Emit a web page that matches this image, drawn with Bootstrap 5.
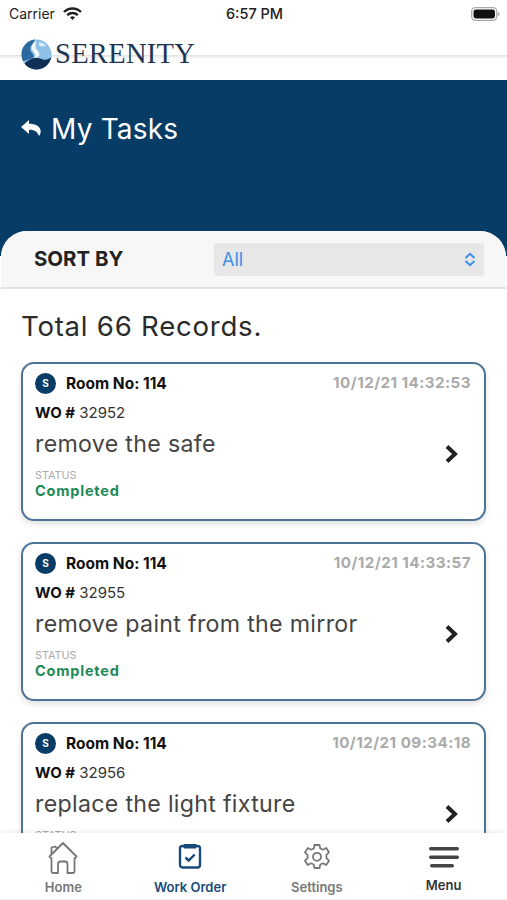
<!DOCTYPE html>
<html lang="en">
<head>
    <meta charset="UTF-8">
    <meta name="viewport" content="width=device-width, initial-scale=1.0">
    <title>My Tasks</title>
    <link href="https://cdn.jsdelivr.net/npm/bootstrap@5.3.0/dist/css/bootstrap.min.css" rel="stylesheet">
    <style>
        html, body { height: 900px; overflow: hidden; }
        body { font-family: Inter, "Open Sans", sans-serif; background: #fff; color: #222; }
        .phone { height: 900px; overflow: hidden; position: relative; }

        .status-bar { height: 27px; padding: 0 7px 0 9px; font-size: 14px; color: #222; }
        .status-left { width: 170px; }
        .status-time { font-weight: 500; font-size: 14.5px; }
        .status-right { width: 170px; }

        .logo-bar { height: 53px; position: relative; }
        .logo-line { position: absolute; left: 0; right: 0; top: 28px; height: 3px; background: linear-gradient(#e2e2e2, #f6f6f6); }
        .logo-wrap { position: relative; padding: 11px 0 0 21px; }
        .logo-text { font-family: "Liberation Serif", serif; font-size: 28.5px; line-height: 32px; color: #1d3553; margin-left: 3px; letter-spacing: .3px; }

        .hero { height: 176px; background: #073c67; color: #fff; padding: 31px 20px 0; }
        .hero-title { font-size: 28px; line-height: 36px; font-weight: 400; margin: 0 0 0 9px; letter-spacing: .2px; }

        .panel { margin: -25px 1px 0; background: #fff; border-radius: 26px 26px 0 0; overflow: hidden; }
        .sort-row { height: 58px; background: #f7f7f7; border-bottom: 2px solid #e2e2e2; padding: 12px 22px 0 33px; }
        .sort-label { font-size: 20.4px; font-weight: 700; width: 180px; color: #222; line-height: 32px; }
        .sort-box { height: 33px; background: #e7e7e7; border-radius: 3px; padding: 0 8px; color: #3d8fe8; font-size: 18px; }
        .total { font-size: 27.6px; line-height: 34px; margin: 20px 0 19px 20px; color: #2b2b2b; letter-spacing: .75px; font-weight: 400; }

        .task-list { padding: 0 20px 0 20px; gap: 21px; }
        .task-card { height: 159px; border: 2px solid #4d7397; border-radius: 13px; background: #fff; box-shadow: 0 3px 6px rgba(0,0,0,.12); padding: 8px 13px 0 12px; }
        .room-badge { width: 21px; height: 21px; border-radius: 50%; background: #073c67; color: #fff; font-size: 10px; font-weight: 700; }
        .room { font-size: 15.5px; font-weight: 700; color: #111; margin-left: 10px; }
        .stamp { font-size: 15.2px; font-weight: 700; color: #aaa; letter-spacing: .45px; }
        .wo { font-size: 15px; line-height: 18px; margin-top: 9px; color: #333; }
        .wo b { color: #111; }
        .task-name { font-size: 23.2px; line-height: 28px; color: #444; margin-top: 8px; letter-spacing: .3px; }
        .status-cap { font-size: 10.8px; line-height: 13px; color: #aaa; margin-top: 11px; }
        .status-val { font-size: 14.5px; line-height: 16px; font-weight: 700; color: #1c8a57; letter-spacing: .8px; margin-top: 1px; }
        .chev { position: absolute; right: 25px; top: 80px; }

        .tabbar { position: absolute; left: 0; right: 0; bottom: 0; height: 67px; background: #fff; border-bottom: 1px solid #eee; box-shadow: 0 -2px 4px rgba(0,0,0,.06); }
        .tab { width: 127px; height: 100%; font-size: 13px; font-weight: 600; color: #777; padding-top: 8px; }
        .tab svg { display: block; height: 34px; margin-bottom: 3px; }
        .tab-on { color: #174a78; }
        .tab-menu { color: #333; }
        .tab-menu svg { margin-bottom: 1px; }
    </style>
</head>
<body>
<div class="phone">
    <div class="status-bar d-flex align-items-center justify-content-between">
        <div class="status-left d-flex align-items-center gap-2">
            <span>Carrier</span>
            <svg width="19" height="14" viewBox="0 0 19 14" fill="none" stroke="#222" stroke-width="2.4">
                <path d="M1 5a12 12 0 0 1 17 0"/>
                <path d="M4.2 8.2a7.6 7.6 0 0 1 10.6 0"/>
                <path d="M9.5 13 7 10.6a3.5 3.5 0 0 1 5 0z" fill="#222" stroke="none"/>
            </svg>
        </div>
        <div class="status-time">6:57 PM</div>
        <div class="status-right d-flex justify-content-end">
            <svg width="29" height="14" viewBox="0 0 29 14">
                <rect x=".7" y=".7" width="25" height="12.6" rx="3.8" fill="none" stroke="#aaa" stroke-width="1.3"/>
                <rect x="2.5" y="2.5" width="21.5" height="9" rx="2.4" fill="#111"/>
                <path d="M27 5v4c1.200-.3 1.600-1.200 1.600-2s-.4-1.700-1.600-2z" fill="#aaa"/>
            </svg>
        </div>
    </div>

    <div class="logo-bar">
        <div class="logo-line"></div>
        <div class="logo-wrap d-flex align-items-center">
            <svg width="31" height="31" viewBox="0 0 31 31">
                <circle cx="15.500" cy="15.500" r="15" fill="#8fc0e6"/>
                <path d="M14 .6C6.500 1.200.5 7.500.5 15.500c0 2.500.6 4.800 1.700 6.800 2.800-1.300 6.800-1.600 9.300-3.300 1.700-1.300 1.400-3.300-.2-4.800C9 12 8.500 9 10.500 6.500 11.500 5 13 3 14 .6z" fill="#2b6a9f"/>
                <path d="M3.500 24.500C6 28 10.500 30.500 15.500 30.500c7.500 0 13.500-5.500 14.800-12.500-2.500 2.500-5.800 3.500-8.800 2.300-3-1-6-2.300-9-1.300-3.500 1-6.500 3-9 5.500z" fill="#0e3057"/>
                <path d="M15 1.500c-2.500 2.500-5 5-4.500 8 .4 2.500 3.500 4 3.800 6.800.2 1.500-.7 2.500-2 3 4-.3 6.500-2 6-4.800-.5-2.800-4-4.200-3.800-7 .1-2 .8-4 .5-6z" fill="#f4f8fb"/>
                <path d="M18 3.500c2.500-.5 5.500 1 6.500 3.500-2 .3-3.500.5-5 .3-1.500-.5-2-2.500-1.500-3.800z" fill="#dcebf7"/>
            </svg>
            <span class="logo-text">SERENITY</span>
        </div>
    </div>

    <div class="hero d-flex align-items-start">
        <svg width="22" height="19" viewBox="0 0 22 19" class="mt-2" fill="#fff">
            <path d="M9 1 1 8l8 7v-4.300c5 0 8 1.300 10 6.300 1.500-2 2-4 1.500-6-1-4.500-6-6.200-11.500-6.300z"/>
        </svg>
        <h1 class="hero-title">My Tasks</h1>
    </div>

    <div class="panel">
        <div class="sort-row d-flex">
            <div class="sort-label">SORT BY</div>
            <div class="sort-box flex-grow-1 d-flex align-items-center justify-content-between">
                <span>All</span>
                <svg width="12" height="15" viewBox="0 0 12 15" fill="none" stroke="#3d8fe8" stroke-width="2">
                    <path d="M1.500 6 6 1.800 10.500 6M1.500 9 6 13.200 10.500 9"/>
                </svg>
            </div>
        </div>
        <h2 class="total">Total 66 Records.</h2>
        <div class="task-list d-flex flex-column" id="tasks"></div>
    </div>

    <div class="tabbar d-flex">
        <div class="tab d-flex flex-column align-items-center">
            <svg width="30" height="34" viewBox="0 0 30 34" fill="none" stroke="#777" stroke-width="1.800" stroke-linejoin="round">
                <path d="M1.500 15.500 15 2l13.500 13.500-2 2v13a1.500 1.500 0 0 1-1.500 1.500h-5.500V23a2.500 2.500 0 0 0-2.500-2.500h-5A2.500 2.500 0 0 0 10 23v9H5a1.500 1.500 0 0 1-1.500-1.500v-13z"/>
                <path d="M3.500 13.500V6.500L7 5.500l2.500 2"/>
            </svg>
            <span>Home</span>
        </div>
        <div class="tab tab-on d-flex flex-column align-items-center">
            <svg width="24" height="34" viewBox="0 0 24 34" fill="none" stroke="#174a78" stroke-width="2.400">
                <rect x="2" y="5" width="20" height="21.500" rx="2.500"/>
                <path d="M6 3.500h12v3.500H6z" fill="#174a78" stroke-width="1"/>
                <path d="M7.500 16.500l3.200 3 6-6"/>
            </svg>
            <span>Work Order</span>
        </div>
        <div class="tab d-flex flex-column align-items-center">
            <svg width="28" height="34" viewBox="0 0 28 34" fill="none" stroke="#777" stroke-width="1.800" stroke-linejoin="round">
                <path d="M11.500 4h5l.8 3.500 2.700 1.200 3.200-1.700 2.800 4.300-2.600 2.500v3.400l2.600 2.500-2.800 4.300-3.200-1.700-2.700 1.200-.8 3.500h-5l-.8-3.500-2.700-1.200-3.200 1.700-2.800-4.300 2.600-2.500v-3.400l-2.600-2.500L5 7l3.200 1.700 2.700-1.200z"/>
                <circle cx="14" cy="15.800" r="4"/>
            </svg>
            <span>Settings</span>
        </div>
        <div class="tab tab-menu d-flex flex-column align-items-center">
            <svg width="30" height="34" viewBox="0 0 30 34" fill="#444">
                <rect y="6" width="30" height="3.500" rx="1.700"/>
                <rect y="14.500" width="30" height="3.500" rx="1.700"/>
                <rect x="1" y="23" width="24" height="3.500" rx="1.700"/>
            </svg>
            <span>Menu</span>
        </div>
    </div>
</div>

<script>
    const tasks = [
        { stamp: '10/12/21 14:32:53', wo: '32952', name: 'remove the safe' },
        { stamp: '10/12/21 14:33:57', wo: '32955', name: 'remove paint from the mirror' },
        { stamp: '10/12/21 09:34:18', wo: '32956', name: 'replace the light fixture' }
    ];

    document.getElementById('tasks').innerHTML = tasks.map(t => `
        <div class="task-card position-relative flex-shrink-0">
            <div class="d-flex align-items-center justify-content-between">
                <div class="d-flex align-items-center">
                    <span class="room-badge d-flex align-items-center justify-content-center">S</span>
                    <span class="room">Room No: 114</span>
                </div>
                <span class="stamp">${t.stamp}</span>
            </div>
            <div class="wo"><b>WO #</b> ${t.wo}</div>
            <div class="task-name">${t.name}</div>
            <div class="status-cap">STATUS</div>
            <div class="status-val">Completed</div>
            <svg class="chev" width="15" height="20" viewBox="0 0 15 20" fill="none" stroke="#222" stroke-width="4">
                <path d="M3 2.500 11 10l-8 7.500"/>
            </svg>
        </div>`).join('');
</script>
<script src="https://cdn.jsdelivr.net/npm/bootstrap@5.3.0/dist/js/bootstrap.bundle.min.js"></script>
</body>
</html>
